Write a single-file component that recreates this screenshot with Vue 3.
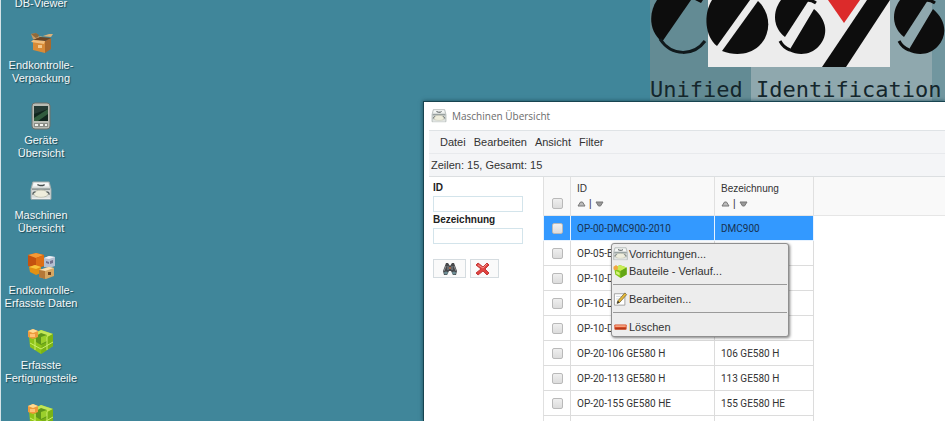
<template>
  <div class="desktop">
    <!-- Symbole, die mehrfach verwendet werden -->
    <svg class="symbols" width="0" height="0" aria-hidden="true">
      <symbol id="icon-box" viewBox="-1 -4 28 28">
        <path d="M3 3l5-1 4 5-2 4-5-3z" fill="#c79a63" />
        <path d="M3 3l5-1 3 2-2 4z" fill="#8d6a3c" />
        <path d="M5 8l8-3 10 1 2-3h-4l-6 2z" fill="#d9b27c" />
        <path d="M5 9l12 1v12L5 19z" fill="#d98b36" />
        <path d="M17 10l6-3v11l-6 4z" fill="#a9692c" />
        <path d="M5 9l7-3 11 1-6 3z" fill="#6b4524" />
        <path d="M5 9l12 1-1 3L3 11z" fill="#f0be7c" />
        <path d="M10 14h4v3h-4z" fill="#f1c98d" />
      </symbol>
      <symbol id="icon-device" viewBox="0 0 22 28">
        <rect x="2" y="1" width="18" height="26" rx="3" fill="#b9bcb4" stroke="#6c706b" />
        <rect x="4" y="4" width="14" height="15" fill="#10251d" />
        <path d="M4 16L18 7v5L8 19H4z" fill="#315c3e" />
        <path d="M4 4h14v3L4 12z" fill="#263b35" />
        <path d="M4 21h14v4H4z" fill="#8b8e87" />
        <path d="M5 22h3v2H5zM10 22h3v2h-3zM15 22h2v2h-2z" fill="#f3f3ee" />
      </symbol>
      <symbol id="icon-machine" viewBox="0 0 24 22">
        <path d="M3 1h18l2 8v11H1V9z" fill="#d8dcda" stroke="#a3abaa" />
        <path d="M4 2h16l1 4H3z" fill="#f5f7f6" />
        <path d="M8 4l3 1h3l2-1" fill="none" stroke="#444c4c" stroke-width="1.5" />
        <path d="M2 8h20v2H2z" fill="#929b9a" />
        <ellipse cx="12" cy="14" rx="8" ry="4" fill="#eeeddc" stroke="#b9bbab" />
        <path d="M3 15c0-2 1-3 3-3M21 15c0-2-1-3-3-3" fill="none" stroke="#5a6262" stroke-width="1.3" />
        <path d="M2 19h20" stroke="#fbfcfb" />
      </symbol>
      <symbol id="icon-boxes" viewBox="0 0 28 28">
        <path d="M1 3l8-2 8 2v11l-8 2-8-2z" fill="#c4520f" />
        <path d="M1 3l8-2 8 2-8 3z" fill="#f49a36" />
        <path d="M9 6l8-3v11l-8 2z" fill="#dd6f14" />
        <path d="M17 6l5-2 6 1v9l-6 2-5-1z" fill="#b4bfd1" />
        <path d="M17 6l5-2 6 1-6 2z" fill="#edf1f7" />
        <path d="M19 9l3 1v2l-3-1zM23 9l3-1v3l-3 1z" fill="#716f8b" />
        <path d="M2 15l6-2 6 2v6l-5 2-6-3z" fill="#e39112" />
        <path d="M2 15l6-2 6 2-5 2z" fill="#f9c43b" />
        <path d="M12 18l10-3 5 1v8l-8 3-7-2z" fill="#d7a762" />
        <path d="M12 18l10-3 5 1-9 3z" fill="#f7deb0" />
        <path d="M18 19v8l-6-2v-7z" fill="#b57837" />
        <path d="M21 20h3v3h-3z" fill="#71451d" />
      </symbol>
      <symbol id="icon-parts" viewBox="0 0 28 26">
        <path d="M2 8l12-6 12 4v12l-12 8-11-7z" fill="#8fc418" />
        <path d="M2 8l12-6 12 4-11 6z" fill="#c3e658" />
        <path d="M15 12l11-6v12l-12 8z" fill="#7ab315" />
        <path d="M9 8l5-3 6 2v7l-6 3-5-3z" fill="#5f961b" />
        <path d="M14 9l6-2v6l-6 3z" fill="#9bcf2c" />
        <path d="M3 15l11 6 12-7M8 11v11M20 9v13" fill="none" stroke="#cbee6a" />
        <path d="M1 3l5-2 5 2v6l-5 2-5-2z" fill="#ee9a3c" />
        <path d="M1 3l5-2 5 2-5 2z" fill="#ffdb91" />
        <path d="M3 6h5v3H3z" fill="#ffc273" />
      </symbol>
      <symbol id="icon-cube" viewBox="0 0 16 16">
        <path d="M1 5l6-4 8 3v8l-7 4-6-4z" fill="#86c81c" />
        <path d="M1 5l6-4 8 3-7 4z" fill="#c9ec55" />
        <path d="M8 8l7-4v8l-7 4z" fill="#63a616" />
        <path d="M3 8l4 2v3l-4-2z" fill="#d6f27a" />
        <path d="M0 3l3-2 2 2v3L2 7 0 6z" fill="#f2a83f" />
      </symbol>
      <symbol id="icon-edit" viewBox="0 0 16 16">
        <path d="M1 2h12v13H1z" fill="#fff" stroke="#999" />
        <path d="M3 5h7M3 8h5" stroke="#ccd3dc" />
        <path d="M4 13l1-3 8-9 2 2-8 9z" fill="#e5b93b" stroke="#6d5b28" stroke-width=".8" />
        <path d="M4 13l1-3 2 2z" fill="#333" />
      </symbol>
      <symbol id="icon-minus" viewBox="0 0 16 16">
        <rect x="1" y="5" width="14" height="6" rx="1" fill="#d84b25" />
        <path d="M2 6h12v2H2z" fill="#f5a27f" />
        <path d="M2 10h12" stroke="#9c2e14" />
      </symbol>
    </svg>

    <!-- Verknüpfungen auf dem Desktop -->
    <nav class="shortcuts">
      <a v-for="(item, index) in shortcuts" :key="index" href="#" class="shortcut">
        <svg v-if="item.icon" class="shortcut-icon" :class="item.icon" aria-hidden="true"><use :href="'#icon-' + item.icon" /></svg>
        <span v-for="line in item.lines" :key="line" class="shortcut-line">{{ line }}</span>
      </a>
    </nav>

    <!-- Firmenlogo -->
    <div class="brand">
      <svg class="brand-art" viewBox="0 0 295 102" aria-label="COSYS" role="img">
        <path d="M0 0h295v102H0z" fill="#638b94" />
        <path d="M101 67h181v35H101zM240 0h42v102h-42z" fill="#8fa8ae" />
        <path d="M282 0h13v102h-13z" fill="#71969f" />
        <path d="M58 0h182v67H58z" fill="#ececec" />
        <g fill="#0d0d0d">
          <path d="M7 0h34L12 42C-2 30-1 12 7 0z" />
          <path d="M10 39c12 18 34 17 45 2" fill="none" stroke="#10191c" stroke-width="3" />
          <path d="M45 0l6 3 2-3z" />
          <path d="M62 0h38L67 46C55 37 53 14 62 0z" />
          <path d="M108 1c14 13 13 34 1 45-10 9-24 10-37 5z" />
          <path d="M131 0h28l-24 37c-12-9-13-25-4-37z" />
          <path d="M164 9c13 11 15 26 5 37-8 9-20 10-30 5z" />
          <path d="M130 41c2 4 5 7 10 9M157 0q5 0 9 3" fill="none" stroke="#0d0d0d" stroke-width="3" />
          <path d="M217 0h23l-44 67h-24z" />
          <path d="M250 0h28l-24 37c-12-9-13-25-4-37z" />
          <path d="M283 9c13 11 15 26 5 37-8 9-20 10-30 5z" />
          <path d="M249 41c2 4 5 7 10 9M276 0q5 0 9 3" fill="none" stroke="#0d0d0d" stroke-width="3" />
        </g>
        <path d="M178 0h32l-16 23z" fill="#dc2b2b" />
      </svg>
      <span class="brand-claim">Unified Identification</span>
    </div>

    <!-- Fenster mit der Maschinenliste -->
    <section class="window">
      <header class="title-bar">
        <svg class="title-icon" aria-hidden="true"><use href="#icon-machine" /></svg>
        <span>Maschinen Übersicht</span>
      </header>

      <div class="window-body">
        <div class="menu-bar">
          <button v-for="entry in menu" :key="entry" type="button" class="menu-entry">{{ entry }}</button>
        </div>
        <div class="status">Zeilen: 15, Gesamt: 15</div>

        <div class="content">
          <!-- Filter -->
          <form class="filter" @submit.prevent>
            <label for="filter-id">ID</label>
            <input id="filter-id" v-model="filterId" type="text" />
            <label for="filter-name">Bezeichnung</label>
            <input id="filter-name" v-model="filterName" type="text" />
            <div class="filter-actions">
              <button type="submit" class="search" aria-label="Suchen">
                <svg width="16" height="14" viewBox="0 0 16 14">
                  <path d="M4 1h2l2 3 2-3h2l3 8-1 4h-3l-2-4H7l-2 4H2L1 9z" fill="#45474a" />
                  <path d="M4 4l-2 5M12 4l2 5M6 4v4M10 4v4" stroke="#8b8e91" />
                  <ellipse cx="4" cy="11" rx="2" ry="1.5" fill="#6e8f96" />
                  <ellipse cx="12" cy="11" rx="2" ry="1.5" fill="#6e8f96" />
                  <path d="M7 5h2v2H7z" fill="#a4674a" />
                </svg>
              </button>
              <button type="button" class="reset" aria-label="Filter löschen" @click="resetFilter">
                <svg width="16" height="16" viewBox="0 0 16 16">
                  <path d="M3 2l5 4 4-4 2 2-4 4 4 4-2 2-4-4-5 4-2-2 5-4-5-4z" fill="#e04340" stroke="#c43a38" />
                  <path d="M3 4l5 3 4-4" fill="none" stroke="#f58e88" />
                </svg>
              </button>
            </div>
          </form>

          <!-- Tabelle -->
          <table class="grid">
            <thead>
              <tr>
                <th class="col-check"><input type="checkbox" aria-label="Alle auswählen" /></th>
                <th v-for="column in columns" :key="column.title" :class="column.css">
                  <div>{{ column.title }}</div>
                  <div class="sort">
                    <button type="button" aria-label="Aufsteigend">
                      <svg width="9" height="6" viewBox="0 0 9 6"><path d="M1 5l2.500-4h2L8 5z" fill="#bbb" stroke="#777" /></svg>
                    </button>
                    <span>|</span>
                    <button type="button" aria-label="Absteigend">
                      <svg width="9" height="6" viewBox="0 0 9 6"><path d="M1 1h7L5.500 5h-2z" fill="#999" stroke="#777" /></svg>
                    </button>
                  </div>
                </th>
                <th class="col-rest"></th>
              </tr>
            </thead>
            <tbody>
              <tr v-for="(row, index) in rows" :key="index" :class="{ selected: index === 0 }">
                <td class="col-check"><input type="checkbox" :aria-label="'Zeile ' + (index + 1)" /></td>
                <td>{{ row.id }}</td>
                <td>{{ row.name }}</td>
                <td class="col-rest"></td>
              </tr>
            </tbody>
          </table>
        </div>
      </div>
    </section>

    <!-- Kontextmenü -->
    <div class="context-menu" role="menu">
      <template v-for="(entry, index) in contextMenu" :key="index">
        <hr v-if="entry.separator" />
        <button v-else type="button" role="menuitem">
          <svg class="context-icon" aria-hidden="true"><use :href="'#icon-' + entry.icon" /></svg>
          <span>{{ entry.label }}</span>
        </button>
      </template>
    </div>
  </div>
</template>

<script setup>
import { ref } from 'vue';

const filterId = ref('');
const filterName = ref('');

const menu = ['Datei', 'Bearbeiten', 'Ansicht', 'Filter'];

const shortcuts = [
  { lines: ['DB-Viewer'] },
  { icon: 'box', lines: ['Endkontrolle-', 'Verpackung'] },
  { icon: 'device', lines: ['Geräte', 'Übersicht'] },
  { icon: 'machine', lines: ['Maschinen', 'Übersicht'] },
  { icon: 'boxes', lines: ['Endkontrolle-', 'Erfasste Daten'] },
  { icon: 'parts', lines: ['Erfasste', 'Fertigungsteile'] },
  { icon: 'parts', lines: [] },
];

const columns = [
  { title: 'ID', css: 'col-id' },
  { title: 'Bezeichnung', css: 'col-name' },
];

const rows = [
  { id: 'OP-00-DMC900-2010', name: 'DMC900' },
  { id: 'OP-05-E', name: '' },
  { id: 'OP-10-D', name: '' },
  { id: 'OP-10-D', name: '' },
  { id: 'OP-10-D', name: '' },
  { id: 'OP-20-106 GE580 H', name: '106 GE580 H' },
  { id: 'OP-20-113 GE580 H', name: '113 GE580 H' },
  { id: 'OP-20-155 GE580 HE', name: '155 GE580 HE' },
  { id: '', name: '' },
];

const contextMenu = [
  { icon: 'machine', label: 'Vorrichtungen...' },
  { icon: 'cube', label: 'Bauteile - Verlauf...' },
  { separator: true },
  { icon: 'edit', label: 'Bearbeiten...' },
  { separator: true },
  { icon: 'minus', label: 'Löschen' },
];

// Setzt beide Filterfelder zurück
const resetFilter = () => {
  filterId.value = '';
  filterName.value = '';
};
</script>

<style>
body {
  margin: 0;
}
</style>

<style scoped>
* {
  box-sizing: border-box;
}

.desktop {
  position: relative;
  height: 100vh;
  overflow: hidden;
  background: #40869a;
  border-left: 1px solid #d5e3e7;
  font-family: "Liberation Sans", Arial, sans-serif;
  font-size: 10px;
  color: #333;
}

.symbols {
  position: absolute;
}

button {
  font: inherit;
  color: inherit;
  border: none;
  background: none;
  padding: 0;
  cursor: pointer;
}

.shortcuts {
  display: flex;
  flex-direction: column;
  gap: 17px;
  width: 80px;
  margin-top: -3px;
}

.shortcut {
  display: flex;
  flex-direction: column;
  align-items: center;
  color: #f4f8f9;
  text-decoration: none;
  text-shadow: 1px 1px 1px #1d4854;
  white-space: nowrap;
}

.shortcut-icon {
  width: 28px;
  height: 28px;
  margin-bottom: 4px;
}

.shortcut-icon.machine {
  padding: 4px 2px;
}

.shortcut-line {
  font-size: 11px;
  line-height: 13px;
}

.brand {
  position: absolute;
  top: 0;
  right: 0;
  width: 295px;
  height: 102px;
}

.brand-art {
  display: block;
  width: 100%;
}

.brand-claim {
  position: absolute;
  left: 0;
  bottom: 0;
  font-family: "DejaVu Sans Mono", monospace;
  font-size: 22px;
  line-height: 24px;
  color: #14262c;
  white-space: nowrap;
}

.window {
  position: absolute;
  top: 101px;
  left: 422px;
  right: 0;
  bottom: 0;
  overflow: hidden;
  background: #fff;
  border-top: 1px solid #174450;
  border-left: 1px solid #174450;
  box-shadow: 0 0 4px #1d4c59;
}

.title-bar {
  display: flex;
  align-items: center;
  gap: 5px;
  height: 28px;
  padding-left: 7px;
  font-family: "Open Sans", "Noto Sans", sans-serif;
  color: #6b6b6b;
}

.title-icon {
  width: 16px;
  height: 14px;
}

.window-body {
  padding-left: 5px;
}

.menu-bar {
  display: flex;
  align-items: center;
  gap: 8px;
  height: 24px;
  padding-left: 11px;
  background: #f4f5f7;
  border-top: 1px solid #dfe3e6;
  border-bottom: 1px solid #e8eaed;
  font-size: 11px;
}

.status {
  height: 23px;
  padding-left: 2px;
  background: #f4f5f7;
  border-bottom: 1px solid #dcdfe1;
  font-size: 11px;
  line-height: 22px;
}

.content {
  display: flex;
}

.filter {
  flex: 0 0 114px;
  display: flex;
  flex-direction: column;
  padding: 3px 20px 0 4px;
}

.filter label {
  font-weight: bold;
  line-height: 16px;
  color: #222;
}

.filter input {
  width: 100%;
  height: 16px;
  padding: 0 2px;
  border: 1px solid #d3e4eb;
  font: inherit;
}

.filter-actions {
  display: flex;
  gap: 4px;
  margin-top: 15px;
}

.filter-actions button {
  display: flex;
  align-items: center;
  justify-content: center;
  height: 19px;
  background: #fafafa;
  border: 1px solid #d5dce0;
}

.filter-actions .search {
  width: 33px;
}

.filter-actions .reset {
  width: 29px;
  padding-right: 3px;
}

.grid {
  flex: 1;
  width: 100%;
  table-layout: fixed;
  border-collapse: separate;
  border-spacing: 0;
}

.grid th {
  height: 39px;
  padding: 4px 0 0 6px;
  vertical-align: top;
  text-align: left;
  font-weight: normal;
  line-height: 15px;
  background: #f9f9f9;
  border-right: 1px solid #e0e0e0;
  border-bottom: 1px solid #e6e6e6;
}

.grid td {
  height: 25px;
  padding: 0 0 0 6px;
  font-family: Roboto, "Liberation Sans", sans-serif;
  white-space: nowrap;
  border-right: 1px solid #dcdcdc;
  border-bottom: 1px solid #dcdcdc;
}

.grid .col-check {
  width: 28px;
  padding: 0;
  text-align: center;
  vertical-align: middle;
  border-left: 1px solid #e0e0e0;
}

.grid th.col-check {
  padding-top: 14px;
}

.col-id {
  width: 144px;
}

.col-name {
  width: 99px;
}

.grid .col-rest {
  border-right: none;
}

.grid td.col-rest {
  border-bottom: none;
}

.grid .selected td:not(.col-rest) {
  background: #3399ff;
  border-color: #e6f2ff;
  color: #173251;
}

.grid input {
  appearance: none;
  display: block;
  width: 11px;
  height: 11px;
  margin: 0 auto;
  border: 1px solid #b9b9b9;
  border-radius: 2px;
  background: linear-gradient(#efefef, #dcdcdc);
}

.sort {
  display: flex;
  align-items: center;
  gap: 3px;
}

.sort button {
  display: flex;
}

.context-menu {
  position: absolute;
  top: 243px;
  left: 610px;
  width: 178px;
  padding: 1px;
  background: #ededed;
  border: 1px solid #8f8f8f;
  border-radius: 3px;
  box-shadow: 1px 1px 3px rgba(0, 0, 0, 0.5);
}

.context-menu button {
  display: flex;
  align-items: center;
  gap: 1px;
  width: 100%;
  height: 17px;
  font-size: 11px;
  text-align: left;
}

.context-menu hr {
  height: 1px;
  margin: 5px 0;
  border: none;
  background: #9a9a9a;
}

.context-icon {
  width: 15px;
  height: 14px;
}
</style>
